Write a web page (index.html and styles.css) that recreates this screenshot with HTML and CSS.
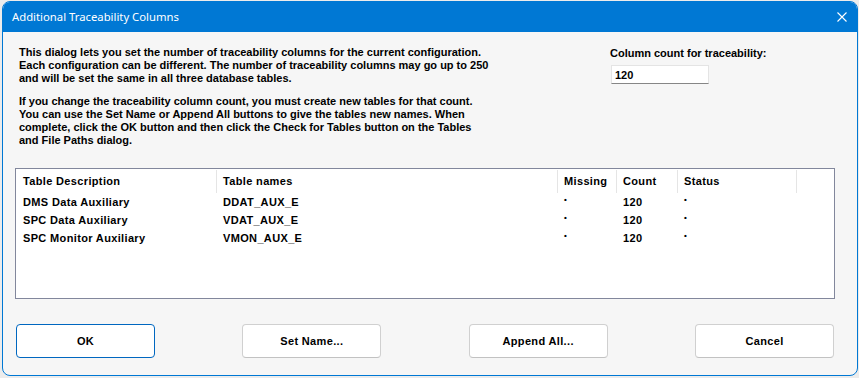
FILE: index.html
```html
<!DOCTYPE html>
<html lang="en">

<head>
    <meta charset="UTF-8">
    <meta name="viewport" content="width=device-width, initial-scale=1.0">
    <title>Additional Traceability Columns</title>
    <link rel="stylesheet" href="styles.css">
</head>

<body>
    <div class="dialog">
        <div class="titlebar">
            <span class="title">Additional Traceability Columns</span>
            <svg class="close" width="10" height="10" viewBox="0 0 10 10">
                <path d="M0.5 0.5 L9.5 9.5 M9.5 0.5 L0.5 9.5" stroke="#fff" stroke-width="1.1" fill="none" />
            </svg>
        </div>

        <div class="content">
            <div class="top">
                <div class="intro">
                    <p>This dialog lets you set the number of traceability columns for the current configuration.<br>
                        Each configuration can be different. The number of traceability columns may go up to 250<br>
                        and will be set the same in all three database tables.</p>
                    <p>If you change the traceability column count, you must create new tables for that count.<br>
                        You can use the Set Name or Append All buttons to give the tables new names. When<br>
                        complete, click the OK button and then click the Check for Tables button on the Tables<br>
                        and File Paths dialog.</p>
                </div>
                <div class="count">
                    <label for="count">Column count for traceability:</label>
                    <input id="count" type="text" value="120">
                </div>
            </div>

            <div class="list">
                <div class="row head">
                    <div>Table Description</div>
                    <div>Table names</div>
                    <div>Missing</div>
                    <div>Count</div>
                    <div>Status</div>
                    <div class="filler"></div>
                </div>
                <div class="row">
                    <div>DMS Data Auxiliary</div>
                    <div>DDAT_AUX_E</div>
                    <div><span class="dot">•</span></div>
                    <div>120</div>
                    <div><span class="dot">•</span></div>
                </div>
                <div class="row">
                    <div>SPC Data Auxiliary</div>
                    <div>VDAT_AUX_E</div>
                    <div><span class="dot">•</span></div>
                    <div>120</div>
                    <div><span class="dot">•</span></div>
                </div>
                <div class="row">
                    <div>SPC Monitor Auxiliary</div>
                    <div>VMON_AUX_E</div>
                    <div><span class="dot">•</span></div>
                    <div>120</div>
                    <div><span class="dot">•</span></div>
                </div>
            </div>

            <div class="buttons">
                <button class="default">OK</button>
                <button>Set Name...</button>
                <button>Append All...</button>
                <button>Cancel</button>
            </div>
        </div>
    </div>
</body>

</html>
```

FILE: styles.css
```css
html {
    font-family: "Liberation Sans", Arial, sans-serif;
    font-size: 11px;
    font-weight: bold;
    color: #000;
}

body {
    margin: 0;
    background: #ececec;
}

.dialog {
    width: 856px;
    height: 375px;
    margin: 1px 0 0 2px;
    box-sizing: border-box;
    border: 1px solid #0078d4;
    border-radius: 8px;
    overflow: hidden;
    background: #f6f6f6;
    display: flex;
    flex-direction: column;
}

.titlebar {
    height: 30px;
    background: #0078d4;
    display: flex;
    align-items: center;
    justify-content: space-between;
    padding: 0 9px 0 9px;
}

.title {
    font-family: "Noto Sans", sans-serif;
    font-size: 11.3px;
    font-weight: normal;
    color: #fff;
    margin-top: -1px;
}

.close {
    margin-right: 1px;
}

.content {
    padding: 14px 12px 0 12px;
}

.top {
    display: flex;
}

.intro {
    width: 591px;
    padding-left: 4px;

    p {
        margin: 0;
        line-height: 13px;
    }

    p + p {
        margin-top: 10px;
    }
}

.count {
    display: flex;
    flex-direction: column;
    padding-top: 1px;

    label {
        line-height: 13px;
    }

    input {
        width: 98px;
        height: 19px;
        box-sizing: border-box;
        margin: 5px 0 0 1px;
        padding: 0 3px;
        font: inherit;
        border: 1px solid #e4e4e4;
        border-bottom-color: #868686;
        background: #fff;
        outline: none;
    }
}

.list {
    width: 820px;
    height: 131px;
    box-sizing: border-box;
    margin-top: 21px;
    border: 1px solid #82879c;
    background: #fff;
    letter-spacing: 0.35px;
}

.row {
    display: grid;
    grid-template-columns: 201px 341px 59px 61px 119px 1fr;
    line-height: 17px;

    > div {
        padding-left: 6px;
        white-space: nowrap;
    }

    > div:first-child {
        padding-left: 7px;
    }
}

.row.head {
    padding: 1px 0 1px;
    line-height: 23px;

    > div {
        border-right: 1px solid #e5e5e5;
    }

    > div.filler {
        border-right: 0;
    }
}

.dot {
    font-size: 8px;
    position: relative;
    top: -4px;
}

.buttons {
    display: flex;
    justify-content: space-between;
    margin-top: 25px;
    padding: 0 11px 0 1px;

    button {
        width: 139px;
        height: 34px;
        font: inherit;
        letter-spacing: 0.35px;
        color: #000;
        background: #fff;
        border: 1px solid #d0d0d0;
        border-bottom-color: #c2c2c2;
        border-radius: 4px;
    }

    button.default {
        border-color: #0067c0;
    }
}
```
